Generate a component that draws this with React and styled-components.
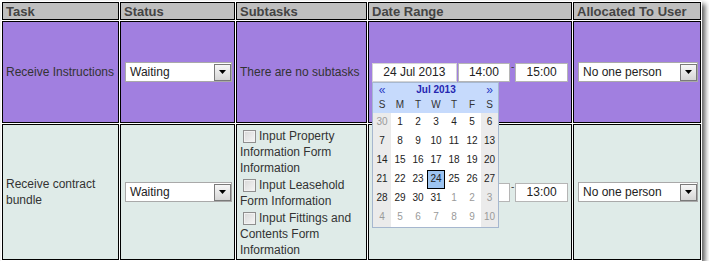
import React from "react";
import styled, { createGlobalStyle } from "styled-components";

const GlobalStyle = createGlobalStyle`
  html, body { margin: 0; padding: 0; background: #fff; }
  body { font-family: "Liberation Sans", Arial, sans-serif; }
`;

const Page = styled.div`
  padding: 1px 0 0 1px;
`;

const Table = styled.table`
  border-collapse: separate;
  border-spacing: 1px;
  table-layout: fixed;
  width: 701px;
  background: #fff;
  box-shadow: 3px 3px 5px rgba(0, 0, 0, 0.65);
  font-size: 12px;
  color: #333;
`;

const Col = styled.col`
  width: ${(p) => p.$w}px;
`;

const Row = styled.tr`
  height: ${(p) => p.$h}px;
`;

const HeadCell = styled.th`
  background: #bfbfbf;
  border: 1px solid #000;
  text-align: left;
  padding: 0 3px;
  font-size: 13px;
  font-weight: bold;
  color: #444;
  line-height: 15px;
`;

const Cell = styled.td`
  background: ${(p) => p.$bg};
  border: 1px solid #000;
  padding: 0 3px;
  vertical-align: middle;
  line-height: 16px;
`;

const SelectBox = styled.div`
  display: flex;
  align-items: center;
  box-sizing: border-box;
  width: ${(p) => p.$w}px;
  height: 20px;
  margin-left: 1px;
  padding-left: 4px;
  border: 1px solid #a9a9a9;
  background: #fff;
  color: #222;
  font-size: 12px;
`;

const ArrowBtn = styled.span`
  margin-left: auto;
  width: 17px;
  height: 17px;
  box-sizing: border-box;
  border: 1px solid #7a7a7a;
  background: linear-gradient(#f7f7f7, #d6d6d6);
  display: flex;
  align-items: center;
  justify-content: center;
`;

const Select = ({ value, w }) => (
  <SelectBox $w={w}>
    <span>{value}</span>
    <ArrowBtn>
      <svg width="7" height="4" viewBox="0 0 7 4">
        <polygon points="0,0 7,0 3.5,4" fill="#000" />
      </svg>
    </ArrowBtn>
  </SelectBox>
);

const Fields = styled.div`
  position: relative;
  display: flex;
  align-items: flex-start;
`;

const Field = styled.div`
  box-sizing: border-box;
  width: ${(p) => p.$w}px;
  height: 19px;
  margin-left: ${(p) => p.$ml || 0}px;
  border: 1px solid ${(p) => p.$border};
  background: #fff;
  text-align: center;
  line-height: 17px;
  font-size: 12px;
  color: #222;
`;

const Dash = styled.span`
  width: 5px;
  text-align: center;
  font-size: 10px;
  line-height: 8px;
  color: #444;
`;

const Calendar = styled.div`
  position: absolute;
  top: 19px;
  left: 0;
  z-index: 5;
  box-sizing: border-box;
  width: 127px;
  border: 1px solid #a6b7cf;
  background: #fff;
  display: grid;
  grid-template-columns: 18px repeat(5, 18px) 17px;
  grid-template-rows: 15px 15px repeat(6, 19px);
  font-size: 10px;
`;

const CalNav = styled.div`
  background: #c6dafc;
  color: #2c3cc4;
  font-size: 12px;
  display: flex;
  align-items: center;
  justify-content: center;
  line-height: 1;
`;

const CalTitle = styled.div`
  grid-column: span 5;
  background: #c6dafc;
  color: #2525b0;
  font-weight: bold;
  display: flex;
  align-items: center;
  justify-content: center;
`;

const DayName = styled.div`
  background: #c6dafc;
  color: #333;
  display: flex;
  align-items: center;
  justify-content: center;
`;

const DayCell = styled.div`
  box-sizing: border-box;
  display: flex;
  align-items: center;
  justify-content: center;
  background: ${(p) => (p.$sel ? "#9dc4f0" : p.$weekend ? "#ebebeb" : "#fff")};
  border: ${(p) => (p.$sel ? "1px solid #000" : "none")};
  color: ${(p) => (p.$other ? "#9a9a9a" : "#222")};
`;

const weeks = [
  [30, 1, 2, 3, 4, 5, 6],
  [7, 8, 9, 10, 11, 12, 13],
  [14, 15, 16, 17, 18, 19, 20],
  [21, 22, 23, 24, 25, 26, 27],
  [28, 29, 30, 31, 1, 2, 3],
  [4, 5, 6, 7, 8, 9, 10],
];

const DatePicker = () => (
  <Calendar>
    <CalNav>«</CalNav>
    <CalTitle>Jul 2013</CalTitle>
    <CalNav>»</CalNav>
    {["S", "M", "T", "W", "T", "F", "S"].map((d, i) => (
      <DayName key={"d" + i}>{d}</DayName>
    ))}
    {weeks.map((w, wi) =>
      w.map((d, di) => {
        const other = (wi === 0 && d > 20) || (wi >= 4 && d < 15);
        return (
          <DayCell
            key={wi + "-" + di}
            $weekend={di === 0 || di === 6}
            $other={other}
            $sel={!other && d === 24}
          >
            {d}
          </DayCell>
        );
      })
    )}
  </Calendar>
);

const SubItem = styled.div`
  line-height: 16px;
`;

const Check = styled.span`
  display: inline-block;
  box-sizing: border-box;
  width: 13px;
  height: 13px;
  margin: 3px 3px 0 3px;
  vertical-align: -3px;
  border: 1px solid #8e8e8e;
  background: linear-gradient(135deg, #d8d8d8, #f6f6f6);
  box-shadow: inset 0 0 0 1px #f2f2f2;
`;

const PURPLE = "#a17fe0";
const MINT = "#dfebe8";

export default function App() {
  return (
    <>
      <GlobalStyle />
      <Page>
        <Table>
          <colgroup>
            <Col $w={117} />
            <Col $w={115} />
            <Col $w={131} />
            <Col $w={204} />
            <Col $w={128} />
          </colgroup>
          <thead>
            <Row $h={18}>
              <HeadCell>Task</HeadCell>
              <HeadCell>Status</HeadCell>
              <HeadCell>Subtasks</HeadCell>
              <HeadCell>Date Range</HeadCell>
              <HeadCell>Allocated To User</HeadCell>
            </Row>
          </thead>
          <tbody>
            <Row $h={102}>
              <Cell $bg={PURPLE}>Receive Instructions</Cell>
              <Cell $bg={PURPLE}>
                <Select value="Waiting" w={107} />
              </Cell>
              <Cell $bg={PURPLE}>There are no subtasks</Cell>
              <Cell $bg={PURPLE}>
                <Fields>
                  <Field $w={85} $border="#d4d4d4">24 Jul 2013</Field>
                  <Field $w={53} $ml={1} $border="#b5b5b5">14:00</Field>
                  <Dash>-</Dash>
                  <Field $w={53} $border="#b5b5b5">15:00</Field>
                  <DatePicker />
                </Fields>
              </Cell>
              <Cell $bg={PURPLE}>
                <Select value="No one person" w={120} />
              </Cell>
            </Row>
            <Row $h={136}>
              <Cell $bg={MINT}>Receive contract bundle</Cell>
              <Cell $bg={MINT}>
                <Select value="Waiting" w={107} />
              </Cell>
              <Cell $bg={MINT}>
                <SubItem>
                  <Check />
                  Input Property Information Form Information
                </SubItem>
                <SubItem>
                  <Check />
                  Input Leasehold Form Information
                </SubItem>
                <SubItem>
                  <Check />
                  Input Fittings and Contents Form Information
                </SubItem>
              </Cell>
              <Cell $bg={MINT}>
                <Fields>
                  <Field $w={85} $border="#b5b5b5" />
                  <Field $w={53} $ml={1} $border="#b5b5b5" />
                  <Dash>-</Dash>
                  <Field $w={53} $border="#b5b5b5">13:00</Field>
                </Fields>
              </Cell>
              <Cell $bg={MINT}>
                <Select value="No one person" w={120} />
              </Cell>
            </Row>
          </tbody>
        </Table>
      </Page>
    </>
  );
}
